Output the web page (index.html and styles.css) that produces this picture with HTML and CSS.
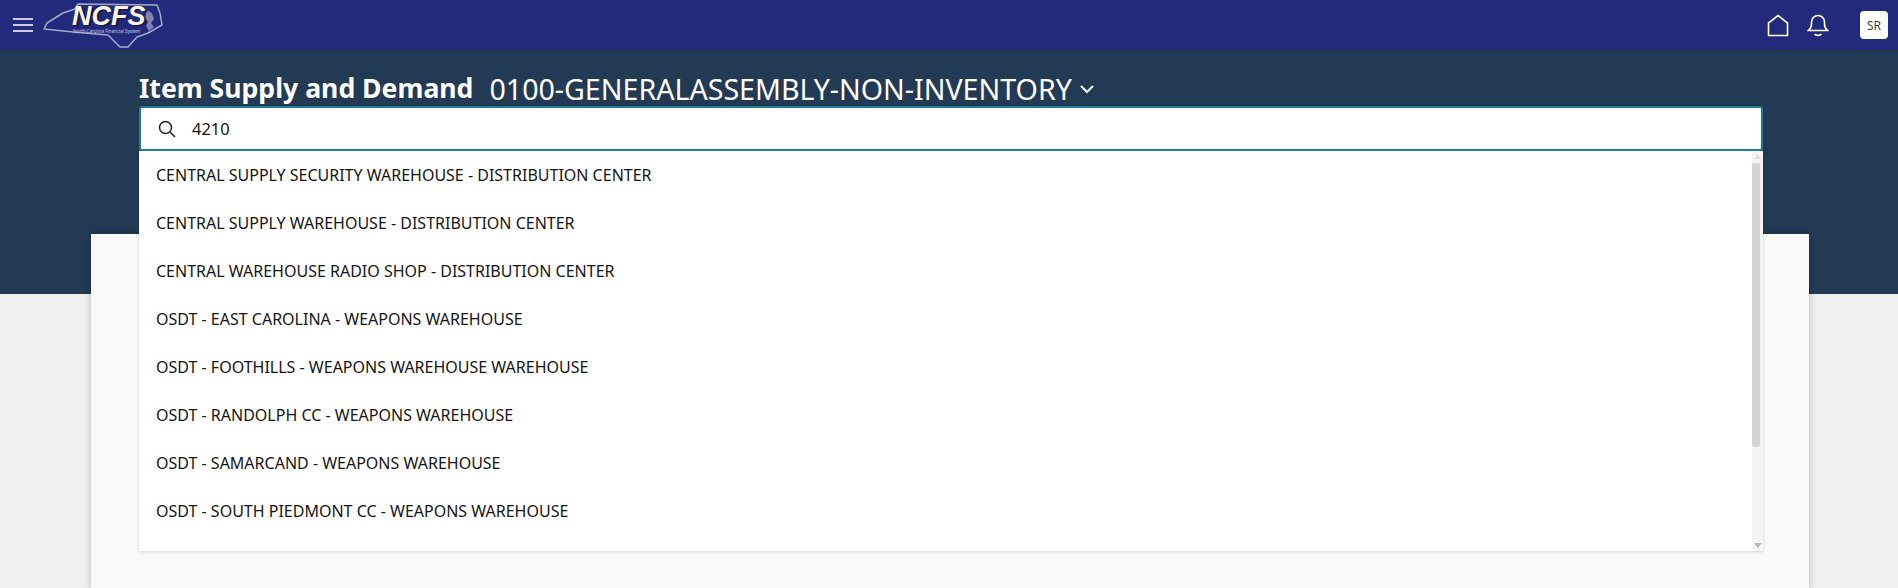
FILE: index.html
```html
<!DOCTYPE html>
<html lang="en">
<head>
  <meta charset="UTF-8" />
  <title>Item Supply and Demand</title>
  <link rel="stylesheet" href="styles.css">
</head>
<body>
  <header class="topbar">
    <button class="menu-btn" aria-label="Menu">
      <svg width="22" height="16" viewBox="0 0 22 16"><path d="M1 2h20M1 8h20M1 14h20" stroke="#fff" stroke-width="1.6" fill="none"/></svg>
    </button>
    <div class="logo">
      <svg class="logo-map" width="122" height="50" viewBox="0 0 122 50">
        <path d="M1 29l3-6 16-10 12-4 3-5 79 1 3 8 2 12-14 8-11 4-9 10h-8L65 35l-35-3z" fill="none" stroke="#a4a9cc" stroke-width="1.500" stroke-linejoin="round"/>
        <path d="M104 10l5 3 2 6-3 4 3 4-5 4-3-5 2-4-3-4z" fill="#a4a9cc" opacity="0.7"/>
      </svg>
      <span class="logo-sub">North Carolina Financial System</span>
      <span class="logo-name">NCFS</span>
    </div>
    <div class="topbar-right">
      <svg class="top-icon" width="24" height="24" viewBox="0 0 24 24"><path d="M2.500 22.500V10L12 2.500 21.500 10v12.500z" fill="none" stroke="#fff" stroke-width="1.6"/></svg>
      <svg class="top-icon" width="22" height="24" viewBox="0 0 22 24"><path d="M1.500 17.500c2-1.500 3-3 3-6.500V9a6.500 6.500 0 0 1 13 0v2c0 3.500 1 5 3 6.500zM7.500 21c1.500 1.800 5.500 1.800 7 0" fill="none" stroke="#fff" stroke-width="1.6"/></svg>
      <div class="avatar">SR</div>
    </div>
  </header>

  <section class="banner">
    <div class="title-row">
      <h1>Item Supply and Demand</h1>
      <span class="org-name">0100-GENERALASSEMBLY-NON-INVENTORY</span>
      <svg width="16" height="12" viewBox="0 0 16 12"><path d="M2 3l6 6 6-6" fill="none" stroke="#fff" stroke-width="2"/></svg>
    </div>
  </section>

  <main class="card"></main>

  <div class="picker">
    <div class="search-box">
      <svg width="20" height="20" viewBox="0 0 20 20"><circle cx="8.500" cy="8.500" r="6" fill="none" stroke="#222" stroke-width="1.500"/><path d="M13 13l5 5" stroke="#222" stroke-width="1.500"/></svg>
      <span class="search-text">4210</span>
    </div>
    <div class="results">
      <ul class="result-list">
        <li>CENTRAL SUPPLY SECURITY WAREHOUSE - DISTRIBUTION CENTER</li>
        <li>CENTRAL SUPPLY WAREHOUSE - DISTRIBUTION CENTER</li>
        <li>CENTRAL WAREHOUSE RADIO SHOP - DISTRIBUTION CENTER</li>
        <li>OSDT - EAST CAROLINA - WEAPONS WAREHOUSE</li>
        <li>OSDT - FOOTHILLS - WEAPONS WAREHOUSE WAREHOUSE</li>
        <li>OSDT - RANDOLPH CC - WEAPONS WAREHOUSE</li>
        <li>OSDT - SAMARCAND - WEAPONS WAREHOUSE</li>
        <li>OSDT - SOUTH PIEDMONT CC - WEAPONS WAREHOUSE</li>
      </ul>
      <div class="scrollbar">
        <div class="arrow-up"></div>
        <div class="thumb"></div>
        <div class="arrow-down"></div>
      </div>
    </div>
  </div>
</body>
</html>
```

FILE: styles.css
```css
body {
  margin: 0;
  height: 588px;
  overflow: hidden;
  background-color: #f0efed;
  font-family: "Noto Sans", "Open Sans", sans-serif;
  color: #161513;
  position: relative;
}

.topbar {
  height: 50px;
  background-color: #222a7c;
  display: flex;
  align-items: center;
  padding: 0 10px 0 12px;
}

.menu-btn {
  background: none;
  border: none;
  padding: 0;
  width: 22px;
  height: 16px;
  display: flex;
}

.logo {
  position: relative;
  width: 122px;
  height: 50px;
  margin-left: 9px;
}

.logo-map {
  display: block;
}

.logo-name {
  position: absolute;
  left: 29px;
  top: 4px;
  font-family: "Liberation Sans", sans-serif;
  font-size: 27px;
  line-height: 24px;
  font-weight: bold;
  font-style: italic;
  color: #fdf6e6;
  text-shadow: 2px 1px 1px #14163f;
}

.logo-sub {
  position: absolute;
  left: 30px;
  top: 28px;
  line-height: 6px;
  font-size: 4.500px;
  white-space: nowrap;
  color: #c8cce0;
}

.topbar-right {
  margin-left: auto;
  display: flex;
  align-items: center;
}

.top-icon {
  margin-right: 17px;
}

.avatar {
  width: 28px;
  height: 28px;
  margin-left: 14px;
  background: #fff;
  border-radius: 4px;
  font-size: 12px;
  color: #444;
  display: flex;
  align-items: center;
  justify-content: center;
}

.banner {
  height: 244px;
  background-color: #233a55;
  padding: 0 139px;
}

.title-row {
  display: flex;
  align-items: center;
  height: 76px;
  color: #fff;
}

h1 {
  margin: 0;
  font-size: 26.600px;
  font-weight: 700;
  white-space: nowrap;
}

.org-name {
  margin-left: 16px;
  font-size: 28.600px;
  white-space: nowrap;
}

.title-row svg {
  margin-left: 7px;
  margin-top: 2px;
}

.card {
  background-color: #faf9f7;
  margin: -60px 89px 0 91px;
  height: 354px;
  position: relative;
  box-shadow: 0 0 7px rgba(0, 0, 0, 0.24);
}

/* dropdown sits over the banner and card */
.picker {
  position: absolute;
  left: 139px;
  top: 106px;
  width: 1624px;
  box-shadow: 0 1px 3px rgba(0, 0, 0, 0.16);
}

.search-box {
  height: 45px;
  box-sizing: border-box;
  background: #fff;
  border: 2px solid #227e94;
  border-radius: 3px;
  display: flex;
  align-items: center;
  padding-left: 16px;
}

.search-text {
  margin-left: 15px;
  font-size: 16.400px;
}

.results {
  display: flex;
  height: 400px;
  background: #fff;
}

.result-list {
  flex: 1;
  list-style: none;
  margin: 0;
  padding: 0;
}

.result-list li {
  height: 48px;
  line-height: 48px;
  padding-left: 17px;
  font-size: 16px;
}

.scrollbar {
  width: 11px;
  background: #f4f4f3;
  display: flex;
  flex-direction: column;
  align-items: center;
}

.arrow-up,
.arrow-down {
  width: 0;
  height: 0;
  border-left: 4px solid transparent;
  border-right: 4px solid transparent;
}

.arrow-up {
  border-bottom: 5px solid #e2e1df;
  margin-top: 3px;
}

.arrow-down {
  border-top: 5px solid #b9b8b6;
  margin-top: auto;
  margin-bottom: 3px;
}

.thumb {
  width: 8px;
  height: 284px;
  margin-top: 4px;
  margin-right: 3px;
  background: #d5d4d2;
  border-radius: 0 0 3px 3px;
}
```
